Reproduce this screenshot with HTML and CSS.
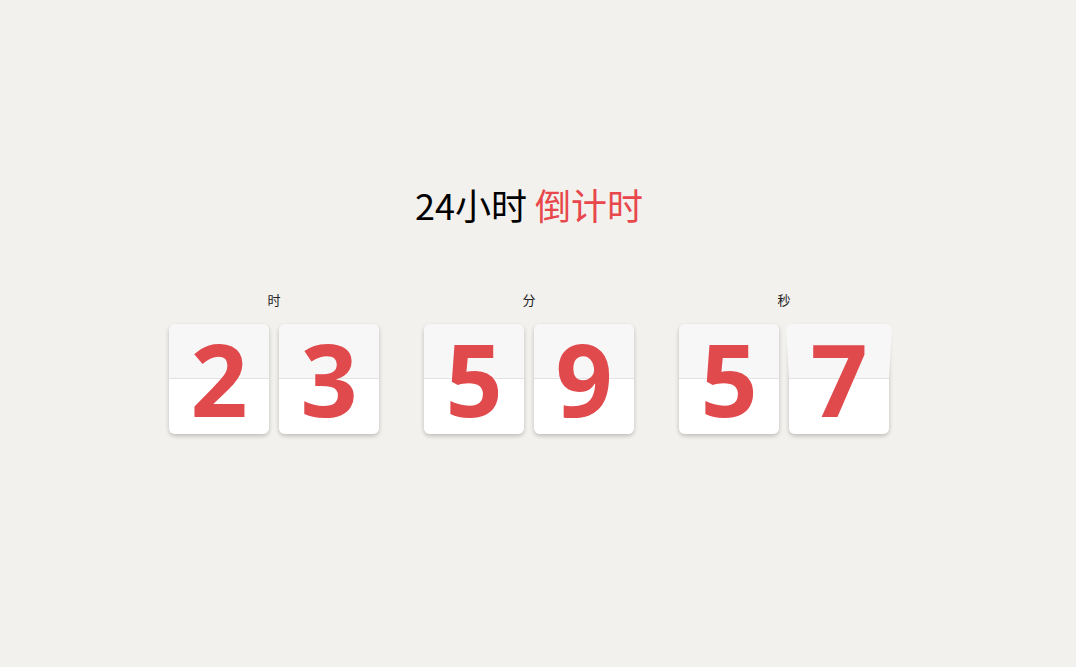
FILE: index.html
```html
<!DOCTYPE html>
<html lang="zh">
<head>
<meta charset="utf-8">
<title>24小时倒计时</title>
<link rel="stylesheet" href="styles.css">
</head>
<body>
<div class="page">
  <h1 class="title">24小时 <span class="accent">倒计时</span></h1>
  <div class="clock">
    <div class="group">
      <div class="label">时</div>
      <div class="cards">
        <div class="card"><span class="digit">2</span></div>
        <div class="card"><span class="digit">3</span></div>
      </div>
    </div>
    <div class="group">
      <div class="label">分</div>
      <div class="cards">
        <div class="card"><span class="digit">5</span></div>
        <div class="card"><span class="digit">9</span></div>
      </div>
    </div>
    <div class="group">
      <div class="label">秒</div>
      <div class="cards">
        <div class="card"><span class="digit">5</span></div>
        <div class="card flipping"><span class="digit">7</span></div>
      </div>
    </div>
  </div>
</div>
</body>
</html>
```
FILE: styles.css
```css
html, body {
  margin: 0;
  padding: 0;
  background: #f2f1ed;
}
body {
  font-family: "Noto Sans", "Noto Sans CJK SC", sans-serif;
  color: #111;
}
.page {
  width: 1058px;
  height: 667px;
  display: flex;
  flex-direction: column;
  align-items: center;
  padding-top: 183px;
  box-sizing: border-box;
}
.title {
  margin: 0;
  font-family: "Noto Sans CJK SC", sans-serif;
  font-weight: 400;
  font-size: 36px;
  line-height: 43px;
  color: #000;
}
.accent {
  color: #e8474c;
}
.clock {
  display: flex;
  gap: 45px;
  margin-top: 65px;
}
.group {
  display: flex;
  flex-direction: column;
  align-items: center;
}
.label {
  font-family: "Noto Sans CJK SC", sans-serif;
  font-size: 13px;
  line-height: 17px;
  color: #222;
  margin-bottom: 16px;
}
.cards {
  display: flex;
  gap: 10px;
}
.card {
  width: 100px;
  height: 110px;
  border-radius: 6px;
  box-shadow: 0 2px 4px rgba(0, 0, 0, 0.22);
  position: relative;
  background: linear-gradient(#f7f7f7 0, #f7f7f7 50%, #fff 50%, #fff 100%);
  text-align: center;
}
.card::after {
  content: "";
  position: absolute;
  left: 0;
  right: 0;
  top: 54px;
  height: 1px;
  background: #e2e2e2;
}
.card.flipping::before {
  content: "";
  position: absolute;
  left: 0;
  right: 0;
  top: 0;
  height: 55px;
  background: #f7f7f7;
  border-radius: 6px 6px 0 0;
  transform-origin: 50% 100%;
  transform: perspective(300px) rotateX(-20deg);
}
.digit {
  position: relative;
  z-index: 1;
  display: block;
  font-family: "Noto Sans", sans-serif;
  font-weight: 700;
  font-size: 100px;
  line-height: 108px;
  color: #e04a4d;
}
```
